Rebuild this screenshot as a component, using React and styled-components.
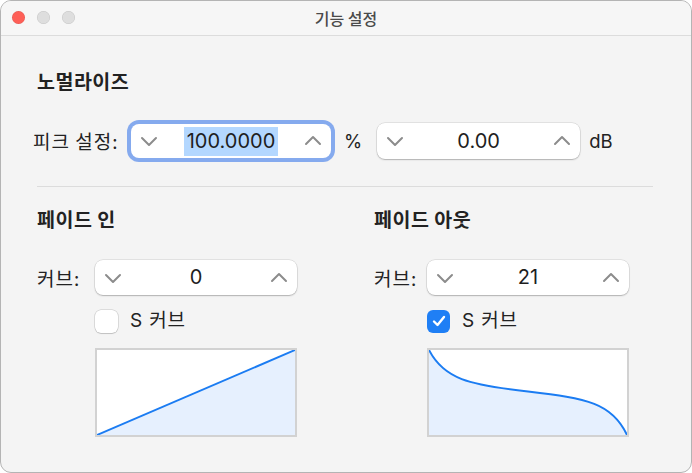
import React from 'react';
import styled, { createGlobalStyle } from 'styled-components';

const GlobalStyle = createGlobalStyle`
  html, body {
    margin: 0;
    padding: 0;
    background: #ffffff;
  }
  body {
    font-family: "Inter", "Noto Sans CJK KR", sans-serif;
    -webkit-font-smoothing: antialiased;
  }
`;

const Window = styled.div`
  box-sizing: border-box;
  width: 692px;
  height: 473px;
  border: 1px solid #b4b4b4;
  border-radius: 11px;
  background: #f4f4f4;
  overflow: hidden;
  display: flex;
  flex-direction: column;
`;

const TitleBar = styled.div`
  position: relative;
  height: 34px;
  flex: none;
  background: #f6f6f6;
  border-bottom: 1px solid #dcdcdc;
  display: flex;
  align-items: center;
  justify-content: center;
`;

const Lights = styled.div`
  position: absolute;
  left: 11px;
  top: 10px;
  display: flex;
  gap: 12px;
`;

const Light = styled.span`
  width: 13px;
  height: 13px;
  border-radius: 50%;
  background: ${({ color }) => color};
  box-shadow: inset 0 0 0 0.5px rgba(0, 0, 0, 0.12);
`;

const Title = styled.div`
  font-family: "Noto Sans CJK KR", sans-serif;
  font-size: 16px;
  color: #4a4a4a;
  font-weight: 500;
  line-height: 20px;
`;

const Body = styled.div`
  padding: 34px 0 0 0;
  display: flex;
  flex-direction: column;
`;

const Heading = styled.div`
  font-family: "Noto Sans CJK KR", sans-serif;
  font-size: 19.5px;
  font-weight: 700;
  line-height: 22px;
  letter-spacing: 0.5px;
  color: #222;
  margin-left: ${({ indent }) => indent}px;
`;

const PeakRow = styled.div`
  display: flex;
  align-items: center;
  margin: 31px 0 0 32px;
  height: 36px;
`;

const Label = styled.div`
  font-family: "Noto Sans CJK KR", sans-serif;
  font-size: 19px;
  line-height: 24px;
  letter-spacing: 1px;
  color: #222;
  width: ${({ width }) => (width ? `${width}px` : 'auto')};
  flex: none;
`;

const Unit = styled.div`
  font-family: "Inter", "Noto Sans CJK KR", sans-serif;
  font-size: 18.5px;
  color: #222;
  margin: ${({ m }) => m};
`;

const StepperBox = styled.div`
  box-sizing: border-box;
  width: ${({ width }) => width}px;
  height: ${({ height }) => height || 36}px;
  flex: none;
  margin-left: ${({ ml }) => ml || 0}px;
  background: #fff;
  border-radius: 8px;
  display: flex;
  align-items: center;
  justify-content: space-between;
  padding: 0 8px;
  box-shadow: ${({ focused }) =>
    focused
      ? '0 0 0 4px rgba(96, 146, 236, 0.75)'
      : '0 0 0 0.5px rgba(0,0,0,0.14), 0 1px 1.5px rgba(0,0,0,0.22)'};
`;

const Value = styled.span`
  font-family: "Inter", sans-serif;
  font-size: 20px;
  color: #1e1e1e;
  line-height: 29px;
  padding: 0 3px;
  background: ${({ selected }) => (selected ? '#b3d7ff' : 'transparent')};
`;

const Chevron = ({ up }) => (
  <svg width="20" height="20" viewBox="0 0 20 20">
    <path
      d={up ? 'M3 13 L10 6 L17 13' : 'M3 7 L10 14 L17 7'}
      fill="none"
      stroke="#8c8c8c"
      strokeWidth="2"
      strokeLinecap="round"
      strokeLinejoin="round"
    />
  </svg>
);

const Stepper = ({ value, width, height, ml, focused, selected }) => (
  <StepperBox width={width} height={height} ml={ml} focused={focused}>
    <Chevron />
    <Value selected={selected}>{value}</Value>
    <Chevron up />
  </StepperBox>
);

const Divider = styled.div`
  height: 1px;
  background: #dcdcdc;
  margin: 27px 38px 0 36px;
`;

const Columns = styled.div`
  display: flex;
  margin-top: 21px;
`;

const Column = styled.div`
  display: flex;
  flex-direction: column;
  width: ${({ width }) => width}px;
  margin-left: ${({ ml }) => ml}px;
`;

const CurveRow = styled.div`
  display: flex;
  align-items: center;
  margin-top: 30px;
  height: 35px;
`;

const Indented = styled.div`
  margin-left: ${({ indent }) => indent}px;
  display: flex;
  flex-direction: column;
`;

const CheckRow = styled.div`
  display: flex;
  align-items: center;
  gap: 12px;
  margin-top: 14px;
`;

const Box = styled.span`
  box-sizing: border-box;
  width: 23px;
  height: 23px;
  border-radius: 6px;
  display: flex;
  align-items: center;
  justify-content: center;
  background: ${({ checked }) => (checked ? '#1f7ff5' : '#fff')};
  box-shadow: ${({ checked }) =>
    checked ? 'none' : '0 0 0 0.5px rgba(0,0,0,0.2), 0 1px 1px rgba(0,0,0,0.12)'};
`;

const CheckLabel = styled.span`
  font-family: "Inter", "Noto Sans CJK KR", sans-serif;
  font-size: 19px;
  line-height: 24px;
  letter-spacing: 0.8px;
  color: #222;
`;

const Graph = styled.div`
  box-sizing: border-box;
  width: 202px;
  height: 89px;
  margin-top: 15px;
  border: 2px solid #d2d2d2;
  background: #fff;
  svg {
    display: block;
  }
`;

const Check = ({ checked, label }) => (
  <CheckRow>
    <Box checked={checked}>
      {checked && (
        <svg width="16" height="16" viewBox="0 0 16 16">
          <path
            d="M3 8.5 L6.5 12 L13 4"
            fill="none"
            stroke="#fff"
            strokeWidth="2.4"
            strokeLinecap="round"
            strokeLinejoin="round"
          />
        </svg>
      )}
    </Box>
    <CheckLabel>{label}</CheckLabel>
  </CheckRow>
);

const CurveGraph = ({ d }) => (
  <Graph>
    <svg width="198" height="85" viewBox="0 0 200 88" preserveAspectRatio="none">
      <path d={`${d} L200 88 L0 88 Z`} fill="#e6f0fe" stroke="none" />
      <path d={d} fill="none" stroke="#1b7cf2" strokeWidth="2" />
    </svg>
  </Graph>
);

const fadeIn = 'M0 88 L200 0';
const fadeOut = 'M0 0 C 15 30 40 36 100 43 C 160 50 185 55 200 88';

export default function App() {
  return (
    <>
      <GlobalStyle />
      <Window>
        <TitleBar>
          <Lights>
            <Light color="#fe5f57" />
            <Light color="#dedede" />
            <Light color="#dedede" />
          </Lights>
          <Title>기능 설정</Title>
        </TitleBar>
        <Body>
          <Heading indent={36}>노멀라이즈</Heading>
          <PeakRow>
            <Label width={98}>피크 설정:</Label>
            <Stepper value="100.0000" width={200} height={34} focused selected />
            <Unit m="0 0 0 13px">%</Unit>
            <Stepper value="0.00" width={203} ml={15} />
            <Unit m="0 0 0 9px">dB</Unit>
          </PeakRow>
          <Divider />
          <Columns>
            <Column width={300} ml={36}>
              <Heading indent={0}>페이드 인</Heading>
              <CurveRow>
                <Label width={58}>커브:</Label>
                <Stepper value="0" width={202} height={35} />
              </CurveRow>
              <Indented indent={58}>
                <Check label="S 커브" />
                <CurveGraph d={fadeIn} />
              </Indented>
            </Column>
            <Column width={300} ml={37}>
              <Heading indent={0}>페이드 아웃</Heading>
              <CurveRow>
                <Label width={53}>커브:</Label>
                <Stepper value="21" width={202} height={35} />
              </CurveRow>
              <Indented indent={53}>
                <Check checked label="S 커브" />
                <CurveGraph d={fadeOut} />
              </Indented>
            </Column>
          </Columns>
        </Body>
      </Window>
    </>
  );
}
